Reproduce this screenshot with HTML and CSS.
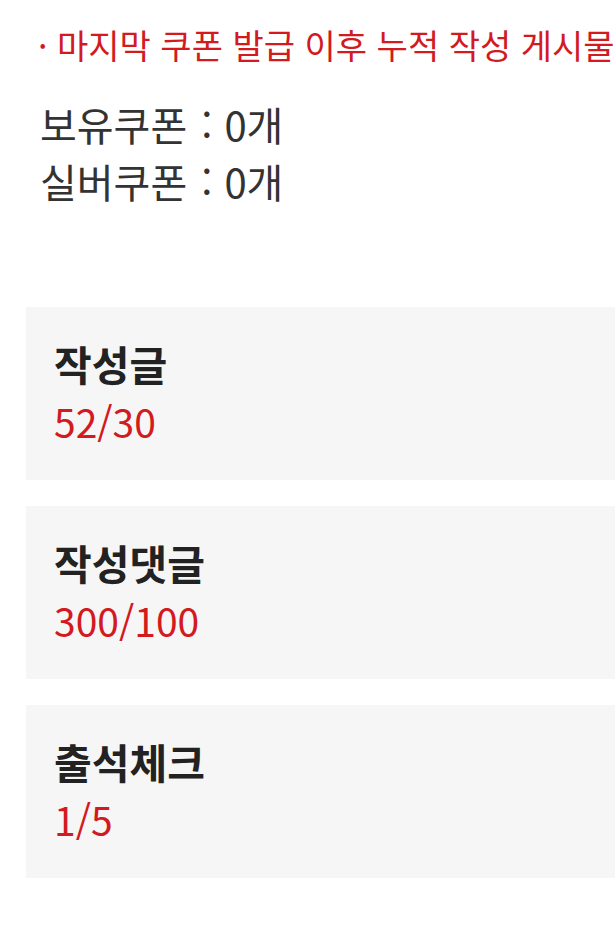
FILE: index.html
```html
<!DOCTYPE html>
<html lang="ko">
<head>
<meta charset="utf-8">
<link rel="stylesheet" href="styles.css">
</head>
<body>
<p class="notice">· 마지막 쿠폰 발급 이후 누적 작성 게시물</p>
<div class="coupons">
  <p class="coupon-line">보유쿠폰<span class="colon">:</span>0개</p>
  <p class="coupon-line">실버쿠폰<span class="colon">:</span>0개</p>
</div>
<div class="stats">
  <div class="card">
    <p class="card-title">작성글</p>
    <p class="card-value">52/30</p>
  </div>
  <div class="card">
    <p class="card-title">작성댓글</p>
    <p class="card-value">300/100</p>
  </div>
  <div class="card">
    <p class="card-title">출석체크</p>
    <p class="card-value">1/5</p>
  </div>
</div>
</body>
</html>
```

FILE: styles.css
```css
html, body {
  margin: 0;
  padding: 0;
  background: #ffffff;
}
body {
  font-family: "Noto Sans CJK KR", "Noto Sans", sans-serif;
  width: 615px;
  overflow: hidden;
}
p {
  margin: 0;
}
.notice {
  margin: 24px 0 0 38px;
  font-size: 34px;
  line-height: 42px;
  color: #d21a1f;
  white-space: nowrap;
}
.coupons {
  margin: 30px 0 0 40px;
  color: #333333;
  font-size: 40px;
  line-height: 57px;
}
.coupon-line {
  white-space: nowrap;
}
.colon {
  display: inline-block;
  margin: 0 12px 0 14px;
}
.stats {
  margin: 97px 0 60px 26px;
  display: flex;
  flex-direction: column;
  gap: 26px;
}
.card {
  background: #f6f6f6;
  height: 173px;
  box-sizing: border-box;
  padding: 30px 28px 0;
}
.card-title {
  font-size: 41px;
  line-height: 52px;
  font-weight: 700;
  color: #222222;
}
.card-value {
  margin-top: 8px;
  font-size: 39px;
  line-height: 48px;
  color: #d21a1f;
}
```
